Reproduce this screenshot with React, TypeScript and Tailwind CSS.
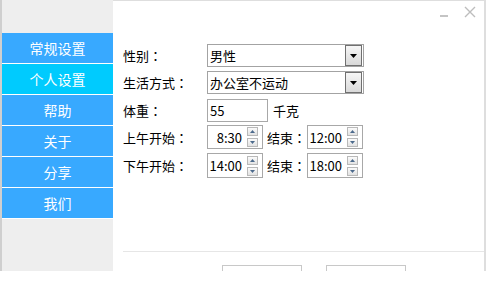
import React from "react";

const menu = ["常规设置", "个人设置", "帮助", "关于", "分享", "我们"];

function Label({ text, w = "w-[84px]" }: { text: string; w?: string }) {
  return (
    <span className={`${w} shrink-0 leading-none`}>
      {text}
      <span className="font-['Noto_Sans_CJK_JP',sans-serif]">：</span>
    </span>
  );
}

function Select({ value }: { value: string }) {
  return (
    <div className="flex h-[23px] w-[157px] items-center border border-[#a3a3a3] bg-white">
      <span className="flex-1 pl-[2px] leading-none">{value}</span>
      <div className="mr-px flex h-[21px] w-[17px] items-center justify-center border border-[#707070] bg-gradient-to-b from-[#f6f6f6] to-[#d9d9d9]">
        <svg width="7" height="4" viewBox="0 0 7 4">
          <polygon points="0,0 7,0 3.5,4" fill="#000" />
        </svg>
      </div>
    </div>
  );
}

function Spin({ value, h }: { value: string; h: string }) {
  return (
    <div className={`flex ${h} w-[56px] shrink-0 items-center border border-[#a8a8a8] bg-white`}>
      <span className="flex-1 pr-[5px] text-right leading-none">{value}</span>
      <div className="mr-[4px] flex flex-col gap-[2px]">
        <div className="flex h-[9px] w-[11px] items-center justify-center border border-[#b9b9b9] bg-gradient-to-b from-[#fbfbfb] to-[#e2e2e2]">
          <svg width="5" height="3" viewBox="0 0 5 3">
            <polygon points="0,3 5,3 2.5,0" fill="#4c6a8c" />
          </svg>
        </div>
        <div className="flex h-[9px] w-[11px] items-center justify-center border border-[#b9b9b9] bg-gradient-to-b from-[#fbfbfb] to-[#e2e2e2]">
          <svg width="5" height="3" viewBox="0 0 5 3">
            <polygon points="0,0 5,0 2.5,3" fill="#4c6a8c" />
          </svg>
        </div>
      </div>
    </div>
  );
}

export default function App() {
  return (
    <div className="h-[281px] w-[487px] bg-white font-['Noto_Sans_CJK_SC','Noto_Sans',sans-serif] text-[13px] text-black">
      <div className="flex h-[271px] w-[486px] overflow-hidden">
        <div className="flex w-[113px] shrink-0 flex-col border-l-2 border-[#cfcfcf] bg-[#eeeeee] pt-[33px]">
          {menu.map((m, i) => (
            <div
              key={m}
              className={`flex h-[31px] shrink-0 items-center justify-center border-b border-white text-[14px] leading-none text-white ${
                i === 1 ? "bg-[#00cbfe]" : "bg-[#38a9ff]"
              }`}
            >
              {m}
            </div>
          ))}
        </div>
        <div className="relative flex flex-1 flex-col border-r-2 border-t border-[#dedede] pl-[10px] pt-[43px]">
          <div className="absolute right-[8px] top-[5px] flex items-end gap-[16px]">
            <div className="mb-[1px] h-[2px] w-[8px] bg-[#c4c4c4]" />
            <svg width="12" height="12" viewBox="0 0 12 12">
              <path d="M1 1 L11 11 M11 1 L1 11" stroke="#bdbdbd" strokeWidth="1.4" />
            </svg>
          </div>

          <div className="flex h-[23px] shrink-0 items-center">
            <Label text="性别" />
            <Select value="男性" />
          </div>
          <div className="mt-[4px] flex h-[23px] shrink-0 items-center">
            <Label text="生活方式" />
            <Select value="办公室不运动" />
          </div>
          <div className="mt-[5px] flex h-[23px] shrink-0 items-center">
            <Label text="体重" />
            <div className="flex h-[23px] w-[61px] items-center border border-[#a8a8a8] bg-white pl-[2px] leading-none">
              55
            </div>
            <span className="ml-[5px] leading-none">千克</span>
          </div>
          <div className="mt-[3px] flex h-[24px] shrink-0 items-center">
            <Label text="上午开始" />
            <Spin value="8:30" h="h-[24px]" />
            <span className="ml-[4px] w-[40px] shrink-0 leading-none">
              结束<span className="font-['Noto_Sans_CJK_JP',sans-serif]">：</span>
            </span>
            <Spin value="12:00" h="h-[24px]" />
          </div>
          <div className="mt-[4px] flex h-[25px] shrink-0 items-center">
            <Label text="下午开始" />
            <Spin value="14:00" h="h-[25px]" />
            <span className="ml-[4px] w-[40px] shrink-0 leading-none">
              结束<span className="font-['Noto_Sans_CJK_JP',sans-serif]">：</span>
            </span>
            <Spin value="18:00" h="h-[25px]" />
          </div>

          <div className="mt-[73px] h-px shrink-0 bg-[#e6e6e6]" />
          <div className="mt-[13px] flex shrink-0 gap-[24px] pl-[99px]">
            <div className="h-[24px] w-[80px] shrink-0 border border-[#c8c8c8] bg-white" />
            <div className="h-[24px] w-[80px] shrink-0 border border-[#c8c8c8] bg-white" />
          </div>
        </div>
      </div>
    </div>
  );
}
